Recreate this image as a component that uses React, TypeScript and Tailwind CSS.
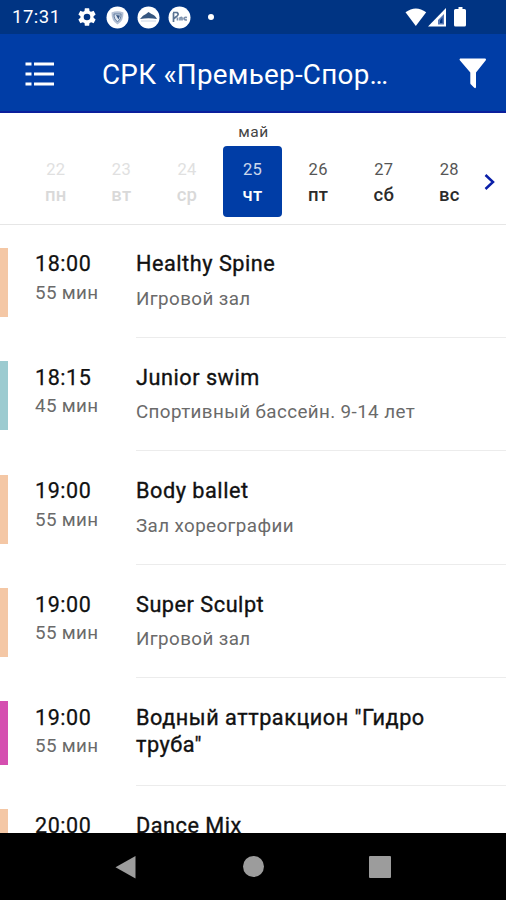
const days = [
  { n: '22', d: 'пн', state: 'past' },
  { n: '23', d: 'вт', state: 'past' },
  { n: '24', d: 'ср', state: 'past' },
  { n: '25', d: 'чт', state: 'active' },
  { n: '26', d: 'пт', state: 'next' },
  { n: '27', d: 'сб', state: 'next' },
  { n: '28', d: 'вс', state: 'next' },
];

const dayStyle: Record<string, string> = {
  past: 'text-[#d9d9d9]',
  active: 'bg-[#003da6] text-white border-[#0a1f9c]',
  next: 'text-[#2b2b2b]',
};

const classes = [
  { time: '18:00', len: '55 мин', title: 'Healthy Spine', place: 'Игровой зал', bar: 'bg-[#f4c7a5]' },
  { time: '18:15', len: '45 мин', title: 'Junior swim', place: 'Спортивный бассейн. 9-14 лет', bar: 'bg-[#9ccbd0]' },
  { time: '19:00', len: '55 мин', title: 'Body ballet', place: 'Зал хореографии', bar: 'bg-[#f4c7a5]' },
  { time: '19:00', len: '55 мин', title: 'Super Sculpt', place: 'Игровой зал', bar: 'bg-[#f4c7a5]' },
  { time: '19:00', len: '55 мин', title: 'Водный аттракцион "Гидро труба"', place: '', bar: 'bg-[#d54fb0]' },
  { time: '20:00', len: '', title: 'Dance Mix', place: '', bar: 'bg-[#f4c7a5]' },
];

function StatusBar() {
  return (
    <div className="flex h-[34px] shrink-0 items-center bg-[#003483] pl-3 pr-[37px] text-white">
      <span className="w-[64px] pt-px text-[18.5px] leading-none tracking-[0.5px]">17:31</span>
      <svg className="h-[22px] w-[22px]" viewBox="0 0 24 24" fill="currentColor">
        <path d="M19.14 12.94c.04-.3.06-.61.06-.94 0-.32-.02-.64-.07-.94l2.03-1.58a.49.49 0 0 0 .12-.61l-1.92-3.32a.488.488 0 0 0-.59-.22l-2.39.96c-.5-.38-1.03-.7-1.62-.94l-.36-2.54a.484.484 0 0 0-.48-.41h-3.84c-.24 0-.43.17-.47.41l-.36 2.54c-.59.24-1.13.57-1.62.94l-2.39-.96c-.22-.08-.47 0-.59.22L2.74 8.87c-.12.21-.08.47.12.61l2.03 1.58c-.05.3-.09.63-.09.94s.02.64.07.94l-2.03 1.58a.49.49 0 0 0-.12.61l1.92 3.32c.12.22.37.29.59.22l2.39-.96c.5.38 1.03.7 1.62.94l.36 2.54c.05.24.24.41.48.41h3.84c.24 0 .44-.17.47-.41l.36-2.54c.59-.24 1.13-.56 1.62-.94l2.39.96c.22.08.47 0 .59-.22l1.92-3.32c.12-.22.07-.47-.12-.61l-2.01-1.58zM12 15.6A3.6 3.6 0 1 1 12 8.4a3.6 3.6 0 0 1 0 7.2z" />
      </svg>
      <svg className="ml-[8px] h-[23px] w-[23px]" viewBox="0 0 23 23">
        <circle cx="11.5" cy="11.5" r="11" fill="#fff" />
        <path d="M5.5 6.5Q11.5 4 17.5 6.5Q17.8 15 11.5 18.5Q5.2 15 5.5 6.5Z" fill="#b3bfd3" />
        <path d="M8 8h7q0 6-3.5 7.5Q8 14 8 8Z" fill="#dfe6f0" stroke="#6580a3" />
        <path d="M10 9l4 .5-1.5 4z" fill="#395782" />
      </svg>
      <svg className="ml-[8px] h-[23px] w-[23px]" viewBox="0 0 23 23">
        <circle cx="11.5" cy="11.5" r="11" fill="#fff" />
        <path d="M3 13Q6 9 9 8L11.5 6 14.5 8Q18 9 20 13Q11.5 11.5 3 13Z" fill="#36567f" />
        <path d="M4 15h15" stroke="#cbd5e3" />
      </svg>
      <svg className="ml-[8px] h-[23px] w-[23px]" viewBox="0 0 23 23">
        <circle cx="11.5" cy="11.5" r="11" fill="#fff" />
        <path d="M5 6.5h4q2.500 2-.5 4L6 12.500M5.500 7v9" fill="none" stroke="#5a7392" strokeWidth="1.7" />
        <path d="M9.500 14.500v-3M12 14.500v-2.500q2-1.500 2 0V14.500M19 11.500q-3-.5-3 1t3 1.500" fill="none" stroke="#7d91ad" strokeWidth="1.7" />
      </svg>
      <span className="ml-[17px] h-[6px] w-[6px] rounded-full bg-white" />
      <svg className="ml-auto h-[22px] w-[64px]" viewBox="0 0 64 22" fill="#fff">
        <path d="M.5 6.2Q10.8-1.4 21.2 6.2L10.8 20Z" />
        <path d="M41 2v18.500H23Z" />
        <path d="M39 8v10.500h-6v-4.500Z" fill="#5577b5" />
        <path d="M35 14.500l2.500-3v5.500H35Z" fill="#003483" />
        <path d="M53.500 1h4v2h2q1.500 0 1.500 1.500v14.500q0 1.500-1.500 1.500h-9q-1.500 0-1.500-1.500V4.500q0-1.500 1.500-1.500h3Z" />
      </svg>
    </div>
  );
}

function Header() {
  return (
    <header className="flex h-[79px] shrink-0 items-center border-b-2 border-[#0a1f9c] bg-[#003da6] pl-[25px] pr-[19px] text-white">
      <svg className="mt-[2px] h-[26px] w-[30px]" viewBox="0 0 30 26" stroke="currentColor" strokeWidth="3.2">
        <path d="M.5 3h6M9 3h20M.5 13h6M9 13h20M.5 23h6M9 23h20" />
      </svg>
      <h1 className="ml-[47px] pt-[4px] text-[27.8px] leading-none tracking-[0.27px] whitespace-nowrap">СРК «Премьер-Спор…</h1>
      <svg className="mt-px ml-auto h-[31px] w-[28px]" viewBox="0 0 28 31" fill="currentColor">
        <path d="M1.200.5H26.300Q27.500 1 26.800 2.200L17 14.500V29Q16.800 31 15 29.500L12 26.500Q11.300 26 11.300 25V14.500L.8 2.200Q0 1 1.200.5Z" />
      </svg>
    </header>
  );
}

function Calendar() {
  return (
    <section className="flex h-[112px] shrink-0 flex-col border-b border-[#e6e6e6]">
      <div className="mt-[10px] h-[23px] pl-px text-center text-[15.5px] leading-[18px] tracking-[0.6px] text-[#444]">май</div>
      <div className="flex items-center pl-[23px]">
        {days.map((day) => (
          <div key={day.n} className="flex w-[65.6px] shrink-0 justify-center">
            <div className={`flex h-[71px] w-[59px] flex-col items-center rounded-[4px] border border-transparent pt-[13px] ${dayStyle[day.state]}`}>
              <span className="text-[16.5px] leading-[20px] tracking-[0.3px] opacity-80">{day.n}</span>
              <span className="mt-[3px] text-[18.5px] leading-[24px] font-medium tracking-[0.3px]">{day.d}</span>
            </div>
          </div>
        ))}
        <svg className="ml-[2px] h-[18px] w-[12px] shrink-0" viewBox="0 0 12 18" fill="none" stroke="#0a1fa8" strokeWidth="2.5">
          <path d="M1.5 2l7.5 7-7.5 7" />
        </svg>
      </div>
    </section>
  );
}

function Schedule() {
  return (
    <main className="-mt-[0.6px] min-h-0 flex-1 overflow-hidden">
      {classes.map((c, i) => (
        <article key={i} className={`flex ${i === 4 ? 'h-[107.6px]' : 'h-[113.4px]'}`}>
          <div className={`mt-[23.5px] mb-[21px] w-[7.5px] shrink-0 ${c.bar}`} />
          <div className="w-[128.5px] shrink-0 pt-[26px] pl-[27.5px]">
            <div className="text-[21.5px] leading-[27px] tracking-[0.55px] text-[#111] [-webkit-text-stroke:0.25px_#111]">{c.time}</div>
            <div className="mt-[1.5px] text-[18.8px] leading-[28px] tracking-[0.35px] text-[#6a6a6a]">{c.len}</div>
          </div>
          <div className="flex-1 border-b-[1.5px] border-[#ececec] pt-[26px]">
            <div className="w-[310px] text-[21.7px] leading-[27px] tracking-[0.52px] text-[#111] [-webkit-text-stroke:0.35px_#111]">{c.title}</div>
            <div className="mt-[7.5px] text-[18.8px] leading-[28px] tracking-[0.4px] text-[#6a6a6a]">{c.place}</div>
          </div>
        </article>
      ))}
    </main>
  );
}

function NavBar() {
  return (
    <nav className="flex h-[67px] shrink-0 items-center justify-between bg-black pr-[115px] pl-[115px]">
      <svg className="h-[24px] w-[21px]" viewBox="0 0 21 24" fill="#9c9c9c">
        <path d="M20.5 1V23.500L.5 12.200Z" />
      </svg>
      <span className="ml-[2px] h-[21px] w-[21px] rounded-full bg-[#9c9c9c]" />
      <span className="h-[22px] w-[22px] rounded-[1px] bg-[#9c9c9c]" />
    </nav>
  );
}

export default function App() {
  return (
    <div className="flex h-[900px] w-[506px] flex-col overflow-hidden bg-white font-['Roboto',sans-serif]">
      <StatusBar />
      <Header />
      <Calendar />
      <Schedule />
      <NavBar />
    </div>
  );
}
